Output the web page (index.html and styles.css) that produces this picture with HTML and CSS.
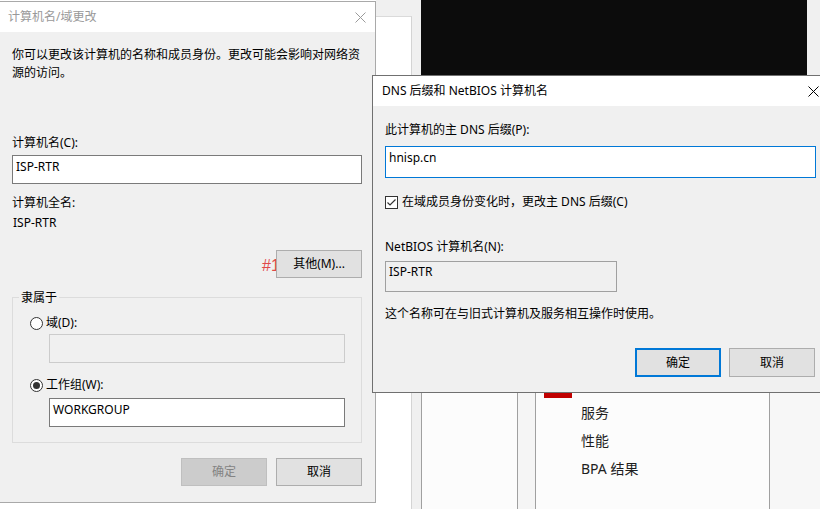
FILE: index.html
```html
<!DOCTYPE html>
<html lang="zh-CN">
<head>
<meta charset="utf-8">
<title>计算机名/域更改</title>
<link rel="stylesheet" href="styles.css">
</head>
<body>
<div class="desktop">
  <div class="bg-left"></div>
  <div class="bg-nav"><div class="bg-nav-panel"></div></div>
  <div class="bg-gap"></div>
  <div class="bg-main">
    <div class="bg-top"><div class="console"></div></div>
    <div class="panes">
      <div class="pane pane-a"></div>
      <div class="pane pane-b"></div>
      <div class="pane pane-c">
        <div class="sel-bar"></div>
        <ul class="menu">
          <li>服务</li>
          <li>性能</li>
          <li>BPA 结果</li>
        </ul>
      </div>
      <div class="pane pane-d"></div>
    </div>
  </div>
</div>

<div class="dialog dlg-name">
  <div class="titlebar">
    <span class="title">计算机名/域更改</span>
    <svg class="close" width="11" height="11" viewBox="0 0 11 11"><path d="M0.5 0.5 L10.5 10.5 M10.5 0.5 L0.5 10.5" stroke="#9a9a9a" stroke-width="1" fill="none"/></svg>
  </div>
  <div class="dlg-body">
    <p class="intro">你可以更改该计算机的名称和成员身份。更改可能会影响对网络资源的访问。</p>
    <div class="lbl lbl-name">计算机名(C):</div>
    <div class="field field-name">ISP-RTR</div>
    <div class="lbl lbl-full">计算机全名:</div>
    <div class="value">ISP-RTR</div>
    <div class="btn-row row-more">
      <div class="btn">其他(M)...</div>
    </div>
    <div class="group">
      <span class="group-title">隶属于</span>
      <div class="radio-row row-domain"><span class="radio"></span><span>域(D):</span></div>
      <div class="field disabled indent field-domain"></div>
      <div class="radio-row row-wg"><span class="radio on"></span><span>工作组(W):</span></div>
      <div class="field indent field-wg">WORKGROUP</div>
    </div>
    <div class="btn-row row-actions">
      <div class="btn disabled">确定</div>
      <div class="btn">取消</div>
    </div>
  </div>
  <span class="note">#1</span>
</div>

<div class="dialog dlg-dns">
  <div class="titlebar">
    <span class="title">DNS 后缀和 NetBIOS 计算机名</span>
    <svg class="close" width="11" height="11" viewBox="0 0 11 11"><path d="M0.5 0.5 L10.5 10.5 M10.5 0.5 L0.5 10.5" stroke="#000" stroke-width="1" fill="none"/></svg>
  </div>
  <div class="dlg-body">
    <div class="lbl">此计算机的主 DNS 后缀(P):</div>
    <div class="field focus">hnisp.cn</div>
    <div class="check-row">
      <svg class="check" width="13" height="13" viewBox="0 0 13 13"><rect x="0.5" y="0.5" width="12" height="12" fill="#fff" stroke="#333"/><path d="M2.5 6.5 L5 9 L10.5 3.5" fill="none" stroke="#333" stroke-width="1.2"/></svg>
      <span>在域成员身份变化时，更改主 DNS 后缀(C)</span>
    </div>
    <div class="lbl lbl-netbios">NetBIOS 计算机名(N):</div>
    <div class="field readonly">ISP-RTR</div>
    <div class="hint">这个名称可在与旧式计算机及服务相互操作时使用。</div>
    <div class="btn-row row-dns">
      <div class="btn default">确定</div>
      <div class="btn">取消</div>
    </div>
  </div>
</div>
</body>
</html>
```

FILE: styles.css
```css
* { box-sizing: border-box; }

html, body { margin: 0; padding: 0; }

body {
  width: 820px;
  height: 509px;
  overflow: hidden;
  position: relative;
  background: #ffffff;
  font-family: "Noto Sans", "Noto Sans CJK SC", sans-serif;
  font-size: 12px;
  line-height: 18px;
  color: #000;
}

/* ---------- background window ---------- */
.desktop { display: flex; height: 509px; }
.bg-left { width: 376px; background: #fff; }
.bg-nav {
  width: 36px;
  background: #f0f0f0;
  padding-top: 16px;
  display: flex;
  flex-direction: column;
}
.bg-nav-panel {
  flex: 1;
  background: #fff;
  border-top: 1px solid #dadada;
  border-right: 1px solid #d4d4d4;
}
.bg-gap { width: 9px; background: #f0f0f0; }
.bg-main { flex: 1; display: flex; flex-direction: column; }
.bg-top { height: 75px; background: #f0f0f0; display: flex; }
.console { width: 386px; background: #0c0c0c; }
.panes { flex: 1; display: flex; }
.pane-a { width: 96px; background: #fcfcfc; border-left: 1px solid #a0a0a0; }
.pane-b { width: 18px; background: #f5f5f5; border-left: 1px solid #a0a0a0; }
.pane-c {
  width: 235px;
  background: #fcfcfc;
  border-left: 1px solid #a0a0a0;
  border-right: 1px solid #a0a0a0;
  padding-top: 313px;
}
.pane-d { flex: 1; background: #f7f7f7; }
.sel-bar { margin-left: 8px; width: 28px; height: 10px; background: #c00000; }
.menu {
  list-style: none;
  margin: 1px 0 0 0;
  padding: 0 0 0 45px;
  font-size: 14px;
  line-height: 28px;
  color: #1e1e1e;
}

/* ---------- dialogs ---------- */
.dialog { position: absolute; background: #f0f0f0; }
.titlebar {
  height: 30px;
  background: #fff;
  display: flex;
  align-items: center;
  justify-content: space-between;
}
.close { display: block; flex: none; }
.dlg-body { display: flex; flex-direction: column; }
.intro { margin: 0; }

.field {
  height: 29px;
  border: 1px solid #7a7a7a;
  background: #fff;
  padding: 2px 3px;
  white-space: nowrap;
}
.btn-row { display: flex; justify-content: flex-end; gap: 9px; }
.btn {
  position: relative;
  z-index: 1;
  width: 86px;
  height: 28px;
  border: 1px solid #adadad;
  background: #e1e1e1;
  display: flex;
  align-items: center;
  justify-content: center;
}
.btn.disabled { background: #cccccc; border-color: #bfbfbf; color: #838383; }

/* computer name dialog (inactive) */
.dlg-name {
  left: -10px;
  top: 1px;
  width: 386px;
  border: 1px solid #a9a9a9;
}
.dlg-name .titlebar { padding: 0 9px 0 17px; }
.dlg-name .title { color: #999; }
.dlg-name .dlg-body { padding: 14px 13px 16px 21px; }
.lbl-name { margin-top: 52px; }
.field-name { margin-top: 3px; }
.lbl-full { margin-top: 10px; }
.value { margin-top: 2px; padding-left: 1px; }
.row-more { margin-top: 18px; }

.group {
  margin-top: 19px;
  border: 1px solid #dcdcdc;
  padding: 0 16px 15px 17px;
  display: flex;
  flex-direction: column;
}
.group-title {
  align-self: flex-start;
  margin: -9px 0 0 -11px;
  padding: 0 2px;
  background: #f0f0f0;
}
.radio-row { display: flex; align-items: center; gap: 3px; }
.row-domain { margin-top: 7px; }
.row-wg { margin-top: 13px; }
.radio {
  width: 13px;
  height: 13px;
  border: 1px solid #333;
  border-radius: 50%;
  background: #fff;
  display: flex;
  align-items: center;
  justify-content: center;
}
.radio.on::after {
  content: "";
  width: 7px;
  height: 7px;
  border-radius: 50%;
  background: #333;
}
.field.indent { margin-left: 19px; }
.field.disabled { background: #f0f0f0; border-color: #cccccc; }
.field-domain { margin-top: 2px; }
.field-wg { margin-top: 4px; }
.row-actions { margin-top: 15px; }

.note {
  position: absolute;
  left: 271px;
  top: 255px;
  color: #e04848;
  font-family: "Liberation Sans", sans-serif;
  font-size: 16px;
  line-height: 18px;
}

/* DNS dialog (active) */
.dlg-dns {
  left: 372px;
  top: 75px;
  width: 466px;
  border: 1px solid #707070;
}
.dlg-dns .titlebar { padding: 0 18px 0 9px; }
.dlg-dns .dlg-body { padding: 15px 21px 15px 12px; }
.field.focus { height: 32px; margin-top: 7px; border-color: #0078d7; }
.check-row { display: flex; align-items: center; gap: 4px; margin-top: 15px; }
.check { display: block; flex: none; }
.lbl-netbios { margin-top: 27px; }
.field.readonly {
  width: 232px;
  height: 31px;
  margin-top: 5px;
  background: #f0f0f0;
  border-color: #a0a0a0;
  padding: 1px 3px;
}
.hint { margin-top: 13px; }
.row-dns { margin-top: 25px; margin-right: 1px; gap: 8px; }
.row-dns .btn { height: 29px; }
.btn.default { border: 2px solid #0078d7; }
```
